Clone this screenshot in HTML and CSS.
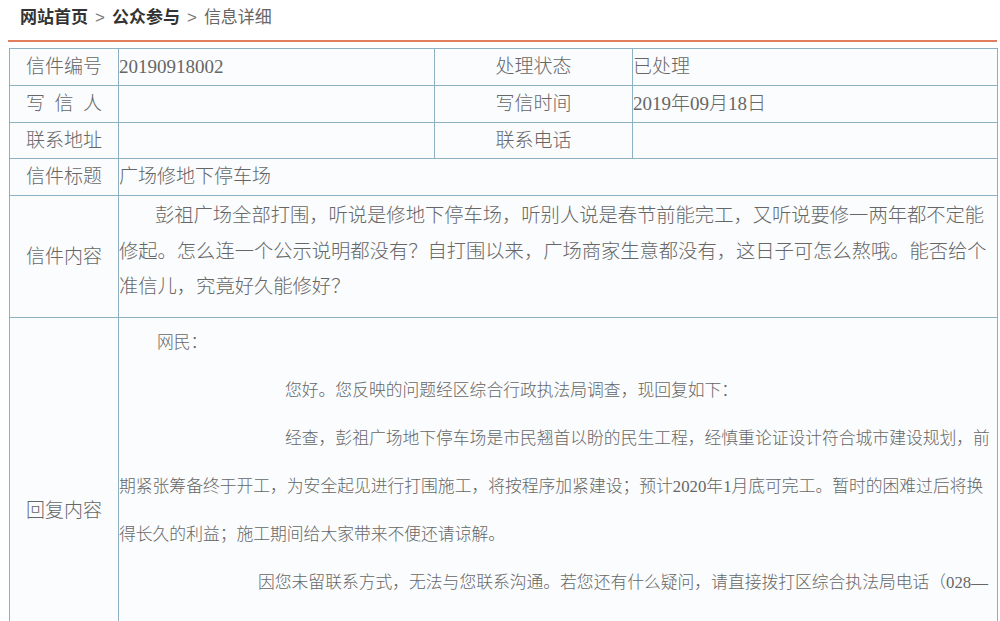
FILE: index.html
```html
<!DOCTYPE html>
<html lang="zh-CN">
<head>
<meta charset="utf-8">
<title>信息详细</title>
<link rel="stylesheet" href="styles.css">
</head>
<body>
<div class="page">
  <div class="crumbs">
    <a class="crumb-link" href="#">网站首页</a><span class="sep">&gt;</span><a class="crumb-link" href="#">公众参与</a><span class="sep">&gt;</span><span class="crumb-current">信息详细</span>
  </div>
  <table class="detail">
    <colgroup>
      <col class="col-label">
      <col class="col-value">
      <col class="col-label2">
      <col class="col-value2">
    </colgroup>
    <tr>
      <th>信件编号</th>
      <td>20190918002</td>
      <th>处理状态</th>
      <td>已处理</td>
    </tr>
    <tr>
      <th><span class="spaced">写信人</span></th>
      <td></td>
      <th>写信时间</th>
      <td>2019年09月18日</td>
    </tr>
    <tr class="row-short">
      <th>联系地址</th>
      <td></td>
      <th>联系电话</th>
      <td></td>
    </tr>
    <tr>
      <th>信件标题</th>
      <td colspan="3">广场修地下停车场</td>
    </tr>
    <tr>
      <th>信件内容</th>
      <td colspan="3" class="letter">
        <p>彭祖广场全部打围，听说是修地下停车场，听别人说是春节前能完工，又听说要修一两年都不定能修起。怎么连一个公示说明都没有？自打围以来，广场商家生意都没有，这日子可怎么熬哦。能否给个准信儿，究竟好久能修好？</p>
      </td>
    </tr>
    <tr>
      <th>回复内容</th>
      <td colspan="3" class="reply">
        <p class="ind-a">网民：</p>
        <p class="ind-b">您好。您反映的问题经区综合行政执法局调查，现回复如下：</p>
        <p class="ind-b">经查，彭祖广场地下停车场是市民翘首以盼的民生工程，经慎重论证设计符合城市建设规划，前期紧张筹备终于开工，为安全起见进行打围施工，将按程序加紧建设；预计2020年1月底可完工。暂时的困难过后将换得长久的利益；施工期间给大家带来不便还请谅解。</p>
        <p class="ind-c">因您未留联系方式，无法与您联系沟通。若您还有什么疑问，请直接拨打区综合执法局电话（028—********）咨询。</p>
        <p class="ind-a">&nbsp;</p>
      </td>
    </tr>
  </table>
</div>
</body>
</html>
```
FILE: styles.css
```css
html, body {
  margin: 0;
  padding: 0;
  background: #ffffff;
}

.page {
  margin-left: 8px;
  width: 990px;
}

.crumbs {
  width: 977px;
  height: 40px;
  line-height: 32px;
  padding-left: 12px;
  border-bottom: 2px solid #e07d5f;
  margin-bottom: 6px;
  font-family: "Noto Sans CJK SC", sans-serif;
  font-size: 17px;
  color: #333333;
  white-space: nowrap;
}

.crumb-link {
  font-weight: bold;
  color: #333333;
  text-decoration: none;
}

.sep {
  font-family: "Liberation Sans", sans-serif;
  font-weight: normal;
  color: #777777;
  margin: 0 7px;
}

.crumb-current {
  color: #666666;
}

.detail {
  margin-left: 1px;
  width: 989px;
  table-layout: fixed;
  border-collapse: separate;
  border-spacing: 0;
  border-top: 1px solid #8db0c3;
  border-left: 1px solid #8db0c3;
  background: #fafcfd;
  font-family: "Liberation Serif", "Noto Sans CJK SC", serif;
  font-size: 19px;
  font-weight: 300;
  color: #666666;
}

.col-label { width: 109px; }
.col-value { width: 316px; }
.col-label2 { width: 198px; }
.col-value2 { width: 365px; }

.detail th,
.detail td {
  border-right: 1px solid #8db0c3;
  border-bottom: 1px solid #8db0c3;
  padding: 0;
  line-height: 36px;
  vertical-align: middle;
  text-align: left;
  font-weight: 300;
  white-space: normal;
}

.detail th {
  text-align: center;
}

.row-short th,
.row-short td {
  line-height: 35px;
}

.spaced {
  letter-spacing: 9.5px;
  margin-right: -9.5px;
}

.detail td.letter {
  padding: 2px 0 12.5px;
  line-height: 35.5px;
  vertical-align: top;
}

.letter p {
  margin: 0;
  text-indent: 36px;
  font-size: 19.3px;
}

.detail td.reply {
  padding: 1px 0 0;
  line-height: 48px;
  font-size: 16.8px;
  vertical-align: top;
}

.reply p {
  margin: 0;
}

.ind-a { text-indent: 38px; }
.ind-b { text-indent: 166px; }
.ind-c { text-indent: 139px; }
```
